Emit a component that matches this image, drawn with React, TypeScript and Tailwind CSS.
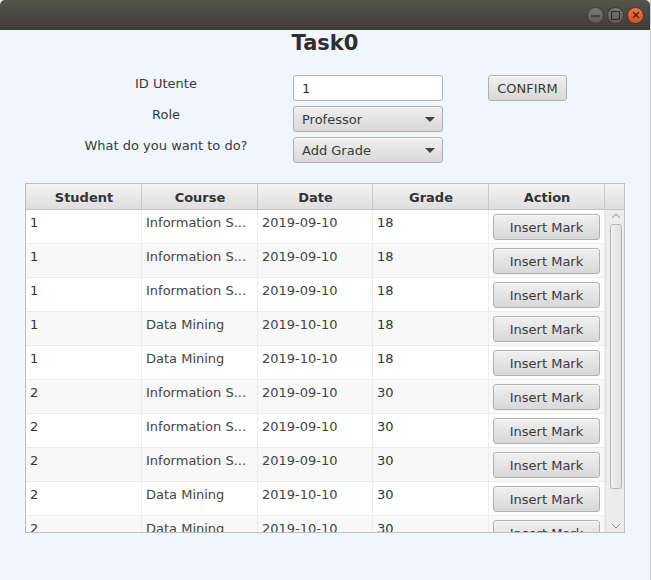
import React from 'react';

const rows = [
  ['1', 'Information S...', '2019-09-10', '18'],
  ['1', 'Information S...', '2019-09-10', '18'],
  ['1', 'Information S...', '2019-09-10', '18'],
  ['1', 'Data Mining', '2019-10-10', '18'],
  ['1', 'Data Mining', '2019-10-10', '18'],
  ['2', 'Information S...', '2019-09-10', '30'],
  ['2', 'Information S...', '2019-09-10', '30'],
  ['2', 'Information S...', '2019-09-10', '30'],
  ['2', 'Data Mining', '2019-10-10', '30'],
  ['2', 'Data Mining', '2019-10-10', '30'],
];

const headers = [
  { label: 'Student', width: 'w-[116px]' },
  { label: 'Course', width: 'w-[116px]' },
  { label: 'Date', width: 'w-[115px]' },
  { label: 'Grade', width: 'w-[116px]' },
  { label: 'Action', width: 'w-[116px]' },
];

const buttonFace =
  'rounded-[3px] border border-[#b0b0b0] bg-gradient-to-b from-[#f0f0f0] to-[#d8d8d8] shadow-[inset_0_1px_0_#fafafa] text-[#3a3a3a]';

const Select: React.FC<{ value: string }> = ({ value }) => (
  <div className={`${buttonFace} flex h-[26px] w-[150px] items-center justify-between pl-2 pr-[7px] pt-[2px] text-[13px]`}>
    <span>{value}</span>
    <svg className="-mt-[2px]" width="10" height="5" viewBox="0 0 10 5">
      <path d="M0 0h10L5 5z" fill="#444" />
    </svg>
  </div>
);

const WindowButton: React.FC<{ close?: boolean; children: React.ReactNode }> = ({ close, children }) => (
  <div
    className={`flex h-[17px] w-[17px] items-center justify-center rounded-full border border-[#3d3b36] ${
      close ? 'bg-gradient-to-b from-[#f0734a] to-[#d9501f]' : 'bg-gradient-to-b from-[#7a7872] to-[#5d5b55]'
    }`}
  >
    {children}
  </div>
);

export default function App() {
  return (
    <div
      className="flex h-[580px] w-[651px] flex-col overflow-hidden bg-[#eff6fe] text-[#333] border-r border-[#c8ccd0]"
      style={{ fontFamily: '"DejaVu Sans", sans-serif' }}
    >
      {/* window title bar */}
      <div className="flex h-[30px] shrink-0 items-center justify-end gap-[3px] rounded-t-[5px] bg-gradient-to-b from-[#56534b] to-[#3e3c36] pr-[6px]">
        <WindowButton>
          <svg width="9" height="9" viewBox="0 0 9 9">
            <path d="M0 5h9" stroke="#2f2e2a" strokeWidth="1.2" />
          </svg>
        </WindowButton>
        <WindowButton>
          <svg width="9" height="9" viewBox="0 0 9 9">
            <rect x="0.5" y="0.5" width="8" height="8" fill="none" stroke="#2f2e2a" strokeWidth="1.1" />
          </svg>
        </WindowButton>
        <WindowButton close>
          <svg width="8" height="8" viewBox="0 0 8 8">
            <path d="M1 1l6 6M7 1l-6 6" stroke="#40200f" strokeWidth="1.2" />
          </svg>
        </WindowButton>
      </div>

      <h1 className="mt-[1px] h-[24px] text-center text-[21px] font-bold leading-[24px] text-[#2e2e2e]">Task0</h1>

      {/* form */}
      <div className="mt-[20px] flex pl-[60px]">
        <div className="flex w-[212px] flex-col gap-[5px] text-center text-[13px] text-[#3a3a3a]">
          <div className="h-[26px] leading-[18px]">ID Utente</div>
          <div className="h-[26px] leading-[18px]">Role</div>
          <div className="h-[26px] leading-[18px]">What do you want to do?</div>
        </div>
        <div className="ml-[21px] flex flex-col gap-[5px]">
          <div className="flex h-[26px] w-[150px] items-center rounded-[3px] border border-[#b4b4b4] bg-white pl-2 pt-[2px] text-[13px] text-[#2b2b55]">
            1
          </div>
          <Select value="Professor" />
          <Select value="Add Grade" />
        </div>
        <div className={`${buttonFace} ml-[45px] flex h-[26px] w-[79px] items-center justify-center pt-[2px] text-[13px]`}>
          CONFIRM
        </div>
      </div>

      {/* table */}
      <div className="ml-[25px] mt-[20px] flex h-[350px] w-[600px] flex-col overflow-hidden border border-[#bfbfbf] bg-white">
        <div className="flex h-[26px] shrink-0 border-b border-[#c4c4c4] bg-gradient-to-b from-[#f3f3f3] to-[#dedede]">
          {headers.map((h) => (
            <div
              key={h.label}
              className={`${h.width} flex items-center justify-center border-r border-[#c8c8c8] pl-[1px] pt-[3px] text-[13px] font-bold text-[#333]`}
            >
              {h.label}
            </div>
          ))}
          <div className="flex-1" />
        </div>
        <div className="flex min-h-0 flex-1">
          <div className="w-[579px] overflow-hidden">
            {rows.map((row, i) => (
              <div
                key={i}
                className={`flex h-[34px] shrink-0 border-b border-[#ececec] ${i % 2 ? 'bg-[#f8f8f8]' : 'bg-white'}`}
              >
                {row.map((cell, j) => (
                  <div
                    key={j}
                    className={`${headers[j].width} border-r border-[#ececec] pl-[4px] pt-[5px] text-[13px] leading-[16px] ${
                      j === 0 || j === 3 ? 'text-[#333]' : 'text-[#444]'
                    }`}
                  >
                    {cell}
                  </div>
                ))}
                <div className="flex w-[116px] items-center justify-center border-r border-[#ececec] pt-[1px]">
                  <div className={`${buttonFace} flex h-[26px] w-[107px] items-center justify-center pt-[2px] text-[13px]`}>
                    Insert Mark
                  </div>
                </div>
              </div>
            ))}
          </div>
          {/* scrollbar */}
          <div className="flex flex-1 flex-col items-center border-l border-[#e2e2e2] bg-[#ececec] pl-[2px]">
            <svg className="mt-[3px] shrink-0" width="10" height="6" viewBox="0 0 10 6">
              <path d="M1 5l4-4 4 4" fill="none" stroke="#8a8a8a" strokeWidth="1" />
            </svg>
            <div className="mt-[5px] h-[265px] w-[12px] shrink-0 rounded-[3px] border border-[#b4b4b4] bg-gradient-to-r from-[#f0f0f0] to-[#e0e0e0]" />
            <svg className="mb-[3px] mt-auto shrink-0" width="10" height="6" viewBox="0 0 10 6">
              <path d="M1 1l4 4 4-4" fill="none" stroke="#8a8a8a" strokeWidth="1" />
            </svg>
          </div>
        </div>
      </div>
    </div>
  );
}
